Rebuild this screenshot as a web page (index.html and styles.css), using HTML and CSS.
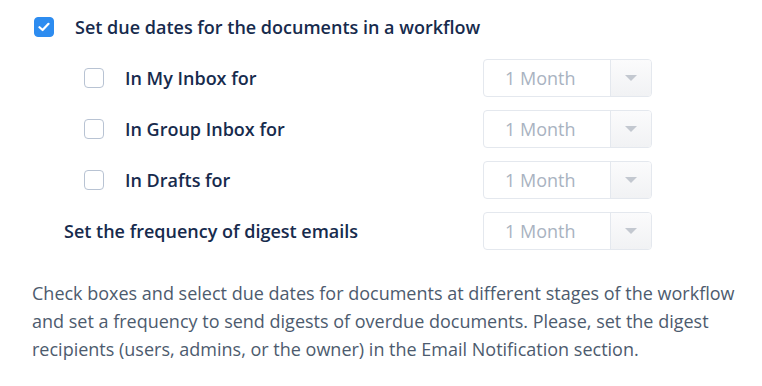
FILE: index.html
```html
<!DOCTYPE html>
<html lang="en">
<head>
  <meta charset="UTF-8" />
  <title>Due dates</title>
  <link rel="stylesheet" href="styles.css">
</head>
<body>
  <div class="panel">

    <!-- main toggle -->
    <label class="main-option">
      <span class="check checked">
        <svg width="12" height="10" viewBox="0 0 12 10"><path d="M1.5 5.2 L4.6 8 L10.5 1.8" fill="none" stroke="#fff" stroke-width="2.2" stroke-linecap="round" stroke-linejoin="round"/></svg>
      </span>
      <span class="main-label">Set due dates for the documents in a workflow</span>
    </label>

    <div class="rows">
      <div class="row">
        <label class="sub-option"><span class="check"></span><span>In My Inbox for</span></label>
        <div class="select"><span class="value">1 Month</span><span class="arrow"></span></div>
      </div>
      <div class="row">
        <label class="sub-option"><span class="check"></span><span>In Group Inbox for</span></label>
        <div class="select"><span class="value">1 Month</span><span class="arrow"></span></div>
      </div>
      <div class="row">
        <label class="sub-option"><span class="check"></span><span>In Drafts for</span></label>
        <div class="select"><span class="value">1 Month</span><span class="arrow"></span></div>
      </div>
      <div class="row">
        <div class="freq-label">Set the frequency of digest emails</div>
        <div class="select"><span class="value">1 Month</span><span class="arrow"></span></div>
      </div>
    </div>

    <p class="hint">Check boxes and select due dates for documents at different stages of the workflow and set a frequency to send digests of overdue documents. Please, set the digest recipients (users, admins, or the owner) in the Email Notification section.</p>
  </div>
</body>
</html>
```

FILE: styles.css
```css
body {
  margin: 0;
  background: #fff;
  font-family: "Open Sans", Arial, sans-serif;
  color: #172b4d;
}

.panel {
  padding: 17px 0 0 34px;
  width: 712px;
}

.check {
  width: 20px;
  height: 20px;
  box-sizing: border-box;
  border: 1.5px solid #b8c3d3;
  border-radius: 4px;
  background: #fff;
  display: flex;
  align-items: center;
  justify-content: center;
  flex-shrink: 0;
}

.check.checked {
  background: #2d8cf0;
  border-color: #2d8cf0;
}

.main-option {
  display: flex;
  align-items: center;
  height: 20px;
  gap: 21px;
}

.main-label,
.sub-option,
.freq-label {
  font-size: 18px;
  font-weight: 600;
  color: #172b4d;
}

.rows {
  margin-top: 22px;
  display: flex;
  flex-direction: column;
  gap: 13px;
}

.row {
  display: grid;
  grid-template-columns: 449px 169px;
  align-items: center;
  height: 38px;
}

.sub-option {
  display: flex;
  align-items: center;
  gap: 21px;
  padding-left: 50px;
}

.freq-label {
  padding-left: 30px;
}

.select {
  display: flex;
  height: 38px;
  box-sizing: border-box;
  border: 1px solid #e4e8ee;
  border-radius: 4px;
  overflow: hidden;
}

.value {
  flex: 1;
  padding-left: 21px;
  line-height: 36px;
  font-size: 18px;
  color: #a9b3c1;
}

.arrow {
  width: 40px;
  border-left: 1px solid #e4e8ee;
  background: linear-gradient(#fbfbfc, #f1f2f4);
  position: relative;
}

.arrow::after {
  content: "";
  position: absolute;
  left: 14px;
  top: 15px;
  border-left: 6px solid transparent;
  border-right: 6px solid transparent;
  border-top: 6px solid #c3c8d0;
}

.hint {
  margin: 29px 0 0 -2px;
  font-size: 18px;
  line-height: 28px;
  color: #4d5b6e;
}
```
